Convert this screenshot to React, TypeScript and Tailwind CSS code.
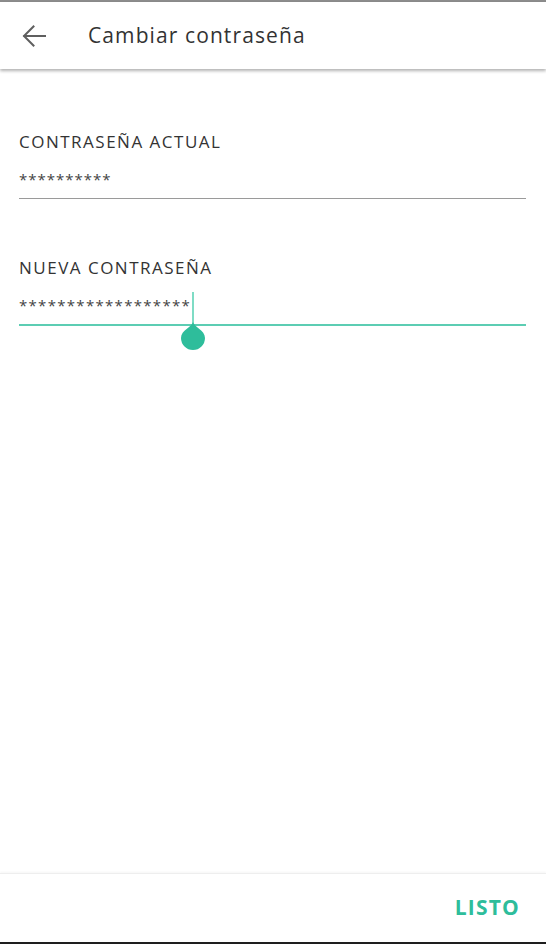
import React from 'react';

const font = { fontFamily: '"Open Sans", "Liberation Sans", sans-serif' };

function BackArrow() {
  return (
    <svg width="24" height="22" viewBox="0 0 24 22" fill="none" stroke="#5f5f5f" strokeWidth="2" strokeLinecap="square">
      <path d="M23 11H2.5" />
      <path d="M11.5 1.5L2 11l9.5 9.5" />
    </svg>
  );
}

function Field({ label, value, active }: { label: string; value: string; active?: boolean }) {
  return (
    <div className="flex flex-col">
      <div className="text-[17px] leading-[20px] text-[#333] tracking-[1.5px]">{label}</div>
      <div className="relative mt-[15px] h-[31px]">
        <span className={active ? 'text-[15px] leading-[18px] text-[#444] tracking-[1.3px]' : 'text-[15px] leading-[18px] text-[#444] tracking-[1px]'}>
          {value}
        </span>
        {active && (
          <>
            <div className="absolute left-[173px] top-[-1px] h-[32px] w-[2px] bg-[#7fdcc5]" />
            <svg className="absolute left-[162px] top-[29px]" width="24" height="28" viewBox="0 0 24 28">
              <path d="M12 0 C13 5 24 8 24 16 A12 12 0 0 1 0 16 C0 8 11 5 12 0Z" fill="#2ebd9b" />
            </svg>
          </>
        )}
      </div>
      <div className={active ? 'h-[2px] bg-[#5ccdb3]' : 'h-px bg-[#9a9a9a]'} />
    </div>
  );
}

export default function App() {
  return (
    <div className="flex h-[944px] w-full flex-col bg-white" style={font}>
      <div className="h-[2px] bg-[#8c8c8c]" />
      <header className="relative z-10 flex h-[67px] items-center bg-white shadow-[0_2px_3px_rgba(0,0,0,0.3)]">
        <div className="ml-[22px] flex w-[24px] items-center">
          <BackArrow />
        </div>
        <h1 className="ml-[42px] text-[21px] tracking-[1.1px] text-[#333]">Cambiar contraseña</h1>
      </header>
      <main className="flex flex-1 flex-col gap-[59px] px-[19px] pt-[63px] pr-[20px]">
        <Field label="CONTRASEÑA ACTUAL" value="**********" />
        <Field label="NUEVA CONTRASEÑA" value="******************" active />
      </main>
      <footer className="flex h-[69px] items-center justify-end border-t border-[#eee] pr-[26px] shadow-[0_-1px_2px_rgba(0,0,0,0.04)]">
        <button className="text-[21px] font-bold tracking-[1.2px] text-[#2ebd9b]">LISTO</button>
      </footer>
      <div className="h-[2px] bg-[#1e1e1e]" />
    </div>
  );
}
